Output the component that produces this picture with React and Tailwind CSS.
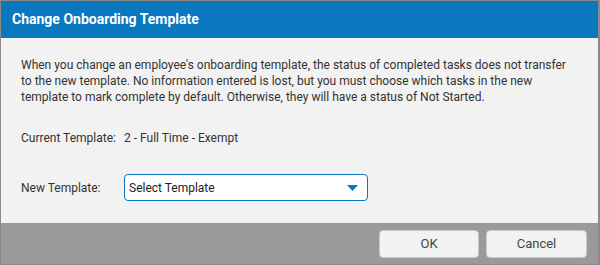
import React from 'react';

const App = () => {
  return (
    <div
      className="w-[600px] h-[265px] flex flex-col bg-[#f2f2f2] border border-[#8a8a8a] border-r-2 overflow-hidden"
      style={{ fontFamily: 'Roboto, "Liberation Sans", sans-serif' }}
    >
      {/* header */}
      <div className="h-[37px] shrink-0 bg-[#0a78bf] flex items-center px-[11px]">
        <h1 className="text-white font-bold text-[14px]">Change Onboarding Template</h1>
      </div>

      {/* body */}
      <div className="flex-1 px-[20px] pt-[19px] text-[12px] text-[#333]">
        <p className="leading-[16px] pr-[10px]">
          When you change an employee's onboarding template, the status of completed tasks does not transfer
          to the new template. No information entered is lost, but you must choose which tasks in the new
          template to mark complete by default. Otherwise, they will have a status of Not Started.
        </p>
        <div className="flex items-center mt-[25px] h-[16px]">
          <span className="w-[103px]">Current Template:</span>
          <span>2 - Full Time - Exempt</span>
        </div>
        <div className="flex items-center mt-[28px]">
          <span className="w-[103px]">New Template:</span>
          <button className="w-[244px] h-[27px] flex items-center justify-between pl-[4px] pr-[9px] bg-white border border-[#0a78bf] rounded-[4px] text-[#222] text-[12px]">
            <span>Select Template</span>
            <svg width="11" height="6" viewBox="0 0 11 6">
              <path d="M0 0h11L5.5 6z" fill="#0a78bf" />
            </svg>
          </button>
        </div>
      </div>

      {/* footer */}
      <div className="h-[41px] shrink-0 bg-[#9a9a9a] flex items-center justify-end gap-[7px] pr-[11px]">
        <button className="w-[100px] h-[28px] bg-[#f2f2f2] border border-[#c8c8c8] rounded-[4px] text-[13px] text-[#444]">
          OK
        </button>
        <button className="w-[101px] h-[28px] bg-[#f2f2f2] border border-[#c8c8c8] rounded-[4px] text-[13px] text-[#444]">
          Cancel
        </button>
      </div>
    </div>
  );
};

export default App;
